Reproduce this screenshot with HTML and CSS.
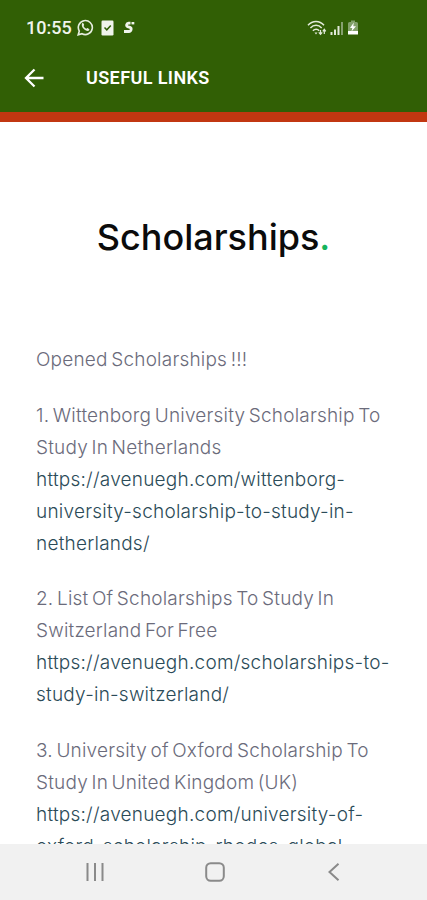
FILE: index.html
```
<!DOCTYPE html>
<html lang="en">
<head>
  <meta charset="UTF-8" />
  <meta name="viewport" content="width=device-width, initial-scale=1.0"/>
  <title>Useful Links</title>
  <link rel="stylesheet" href="styles.css">
</head>
<body>

<div class="screen">
  <header class="header">
    <div class="status-bar">
      <span class="clock">10:55</span>
      <svg class="whatsapp" width="17" height="17" viewBox="0 0 17 17" fill="none" stroke="#e6eddf" stroke-width="1.6">
        <path d="M1.2 15.8l1.1-3.7a7 7 0 1 1 2.7 2.6z"/>
        <path d="M5 4.500c1-1 1.700-.2 2.100 1.300.2.700-.6 1-.4 1.400.5 1.200 1.400 2 2.600 2.600.5.100.9-1 1.500-.6 1.500.6 2 1.100 1.400 2C10.500 14 3.400 8.800 5 4.500z" fill="#e6eddf" stroke="none"/>
      </svg>
      <svg class="task" width="13" height="16" viewBox="0 0 13 16">
        <rect x="0.5" y="0.5" width="12" height="15" rx="1.2" fill="#f0f4ec"/>
        <path d="M3.5 7.5l2.300 2.300 4-4.300" fill="none" stroke="#2f5e05" stroke-width="1.5"/>
      </svg>
      <svg class="s-logo" width="12" height="13" viewBox="0 0 12 13" fill="none" stroke="#f0f4ec">
        <path d="M7.500 2.200H5.500C3.500 2.200 3 5 4.600 5.600l2.400.8c2 .8 1.200 4.100-1 4.100H1" stroke-width="2.800"/>
        <path d="M8.500 2.200h2.800" stroke-width="2.400"/>
      </svg>
      <div class="status-right">
        <svg width="20" height="16" viewBox="0 0 20 16" fill="none" stroke="#e2eada" stroke-width="1.5">
          <path d="M1 5.200c4.500-5 11.500-5 16 0M3.400 8c3.300-3.600 8-3.600 11.300 0M5.900 10.700c1.900-2 4.600-2 6.300 0"/>
          <path d="M7.500 12.500L9 14.500l1.500-2z" fill="#e2eada" stroke="none"/>
          <path d="M13.500 10v4M11.800 12.300l1.700 2 1.700-2M17.300 14V9.800M15.800 11.300l1.500-2 1.500 2" stroke-width="1.2"/>
        </svg>
        <svg width="14" height="14" viewBox="0 0 14 14">
          <path d="M0.5 11h2v3h-2zM4 8.500h2V14H4zM7.500 5h2v9h-2z" fill="#e2eada"/>
          <path d="M11 1h2v13h-2z" fill="#86a06f"/>
        </svg>
        <svg width="12" height="16" viewBox="0 0 12 16">
          <path d="M4 0.500h4V2h1.500q1.500 0 1.500 1.500V11H1V3.500Q1 2 2.500 2H4z" fill="#82a06a"/>
          <path d="M1 11h10v3.500H1z" fill="#fff"/>
          <path d="M6.800 2.500L3 8h2.300l-.8 3.500L9 6.300H6.300z" fill="#fff"/>
        </svg>
      </div>
    </div>
    <div class="title-bar">
      <svg width="20" height="20" viewBox="0 0 20 20" fill="none" stroke="#fff" stroke-width="2.3">
        <path d="M19.500 10H2.500M10.500 1.500L2 10l8.500 8.500"/>
      </svg>
      <h1>USEFUL LINKS</h1>
    </div>
  </header>

  <main class="content">
    <h2>Scholarships<span class="dot">.</span></h2>

    <p class="intro">Opened Scholarships !!!</p>

    <p>1. Wittenborg University Scholarship To<br>Study In Netherlands<br>
      <a>https://avenuegh.com/wittenborg-<br>university-scholarship-to-study-in-<br>netherlands/</a></p>

    <p>2. List Of Scholarships To Study In<br>Switzerland For Free<br>
      <a>https://avenuegh.com/scholarships-to-<br>study-in-switzerland/</a></p>

    <p>3. University of Oxford Scholarship To<br>Study In United Kingdom (UK)<br>
      <a>https://avenuegh.com/university-of-<br>oxford-scholarship-rhodes-global-</a></p>
  </main>

  <nav class="nav-bar">
    <svg width="20" height="20" viewBox="0 0 20 20" stroke="#8a8a8a" stroke-width="2">
      <path d="M2.500 1v18M10 1v18M17.500 1v18"/>
    </svg>
    <svg width="20" height="20" viewBox="0 0 20 20" fill="none" stroke="#8a8a8a" stroke-width="2">
      <rect x="1.2" y="1.2" width="17.6" height="17.6" rx="4.5"/>
    </svg>
    <svg width="20" height="20" viewBox="0 0 20 20" fill="none" stroke="#8a8a8a" stroke-width="2">
      <path d="M14.500 1.800L5.500 10l9 8.200"/>
    </svg>
  </nav>
</div>

</body>
</html>
```
FILE: styles.css
```
body {
  margin: 0;
  background: #fff;
  font-family: Inter, "Liberation Sans", sans-serif;
}

.screen {
  display: flex;
  flex-direction: column;
  height: 900px;
  overflow: hidden;
}

.header {
  flex: none;
  box-sizing: border-box;
  height: 122px;
  background-color: #315f05;
  border-bottom: 10px solid #c23711;
  color: #fff;
  font-family: Roboto, sans-serif;
}

.status-bar {
  display: flex;
  align-items: center;
  height: 55px;
  padding: 0 68px 0 26px;
}

.clock {
  width: 51px;
  font-size: 18px;
  font-weight: 500;
  color: #f0f4ec;
}

.task {
  margin-left: 7px;
}

.s-logo {
  margin-left: 9px;
}

.status-right {
  display: flex;
  align-items: center;
  gap: 3px;
  margin-left: auto;
}

.title-bar {
  display: flex;
  align-items: center;
  height: 45px;
  padding-left: 24px;
}

.title-bar h1 {
  margin: 0 0 1px 42px;
  font-size: 18px;
  font-weight: 600;
  letter-spacing: 0.4px;
}

.content {
  flex: 1;
  min-height: 0;
  overflow: hidden;
  padding: 0 36px;
}

.content h2 {
  margin: 90px 0 82px;
  font-size: 36px;
  line-height: 50px;
  font-weight: 500;
  text-align: center;
  white-space: nowrap;
  color: #0b0b0b;
}

.dot {
  color: #14b45c;
}

.content p {
  margin: 0 0 23.5px;
  font-size: 19px;
  line-height: 32px;
  font-weight: 300;
  letter-spacing: 0.2px;
  word-spacing: -2px;
  white-space: nowrap;
  color: #6b6b7b;
}

.content a {
  letter-spacing: 0.23px;
  color: #2b4b58;
}

.nav-bar {
  flex: none;
  display: flex;
  justify-content: space-between;
  align-items: center;
  box-sizing: border-box;
  height: 56px;
  padding: 0 83px 0 85px;
  background-color: #f1f1f1;
}
```
